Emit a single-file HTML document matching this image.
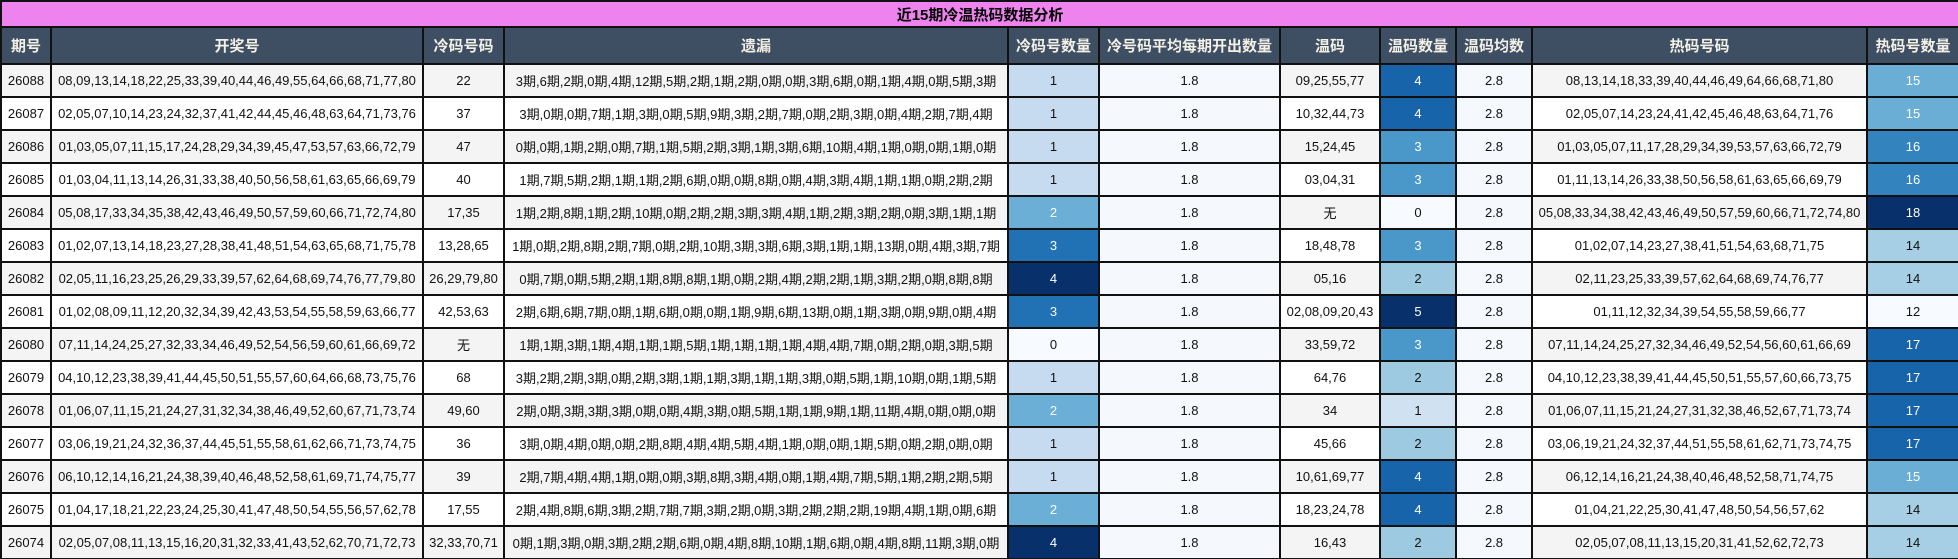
<!DOCTYPE html>
<html><head><meta charset="utf-8"><style>
html,body{margin:0;padding:0;background:#fff;width:1958px;height:559px;overflow:hidden}
table{border-collapse:collapse;table-layout:fixed;width:1958px;font-family:"Liberation Sans","Noto Sans CJK SC",sans-serif;font-size:13px;color:#111}
td,th{border:2px solid #111;text-align:center;padding:0;white-space:nowrap;overflow:hidden}
.t td{background:#ee82ee;font-weight:bold;font-size:15px;height:24px;color:#000}
.h th{background:#3f4f63;color:#f3f0e6;font-size:15px;font-weight:bold;height:35px}
tr.r td{height:31px}
tr.g td{background:#f4f4f4}
tr td.a{background:#f5f9fe}
.w{color:#fff}
</style></head><body>
<table>
<colgroup><col style="width:50px"><col style="width:372px"><col style="width:81px"><col style="width:504px"><col style="width:91px"><col style="width:181px"><col style="width:100px"><col style="width:76px"><col style="width:76px"><col style="width:335px"><col style="width:92px"></colgroup>
<tr class="t"><td colspan="11">近15期冷温热码数据分析</td></tr>
<tr class="h"><th>期号</th><th>开奖号</th><th>冷码号码</th><th>遗漏</th><th>冷码号数量</th><th>冷号码平均每期开出数量</th><th>温码</th><th>温码数量</th><th>温码均数</th><th>热码号码</th><th>热码号数量</th></tr>
<tr class="r g"><td>26088</td><td>08,09,13,14,18,22,25,33,39,40,44,46,49,55,64,66,68,71,77,80</td><td>22</td><td>3期,6期,2期,0期,4期,12期,5期,2期,1期,2期,0期,0期,3期,6期,0期,1期,4期,0期,5期,3期</td><td style="background:#c6dbef">1</td><td class="a">1.8</td><td>09,25,55,77</td><td class="w" style="background:#1764ab">4</td><td class="a">2.8</td><td>08,13,14,18,33,39,40,44,46,49,64,66,68,71,80</td><td class="w" style="background:#6aaed6">15</td></tr>
<tr class="r"><td>26087</td><td>02,05,07,10,14,23,24,32,37,41,42,44,45,46,48,63,64,71,73,76</td><td>37</td><td>3期,0期,0期,7期,1期,3期,0期,5期,9期,3期,2期,7期,0期,2期,3期,0期,4期,2期,7期,4期</td><td style="background:#c6dbef">1</td><td class="a">1.8</td><td>10,32,44,73</td><td class="w" style="background:#1764ab">4</td><td class="a">2.8</td><td>02,05,07,14,23,24,41,42,45,46,48,63,64,71,76</td><td class="w" style="background:#6aaed6">15</td></tr>
<tr class="r g"><td>26086</td><td>01,03,05,07,11,15,17,24,28,29,34,39,45,47,53,57,63,66,72,79</td><td>47</td><td>0期,0期,1期,2期,0期,7期,1期,5期,2期,3期,1期,3期,6期,10期,4期,1期,0期,0期,1期,0期</td><td style="background:#c6dbef">1</td><td class="a">1.8</td><td>15,24,45</td><td class="w" style="background:#4a98c9">3</td><td class="a">2.8</td><td>01,03,05,07,11,17,28,29,34,39,53,57,63,66,72,79</td><td class="w" style="background:#3383be">16</td></tr>
<tr class="r"><td>26085</td><td>01,03,04,11,13,14,26,31,33,38,40,50,56,58,61,63,65,66,69,79</td><td>40</td><td>1期,7期,5期,2期,1期,1期,2期,6期,0期,0期,8期,0期,4期,3期,4期,1期,1期,0期,2期,2期</td><td style="background:#c6dbef">1</td><td class="a">1.8</td><td>03,04,31</td><td class="w" style="background:#4a98c9">3</td><td class="a">2.8</td><td>01,11,13,14,26,33,38,50,56,58,61,63,65,66,69,79</td><td class="w" style="background:#3383be">16</td></tr>
<tr class="r g"><td>26084</td><td>05,08,17,33,34,35,38,42,43,46,49,50,57,59,60,66,71,72,74,80</td><td>17,35</td><td>1期,2期,8期,1期,2期,10期,0期,2期,2期,3期,3期,4期,1期,2期,3期,2期,0期,3期,1期,1期</td><td class="w" style="background:#6baed6">2</td><td class="a">1.8</td><td>无</td><td style="background:#f7fbff">0</td><td class="a">2.8</td><td>05,08,33,34,38,42,43,46,49,50,57,59,60,66,71,72,74,80</td><td class="w" style="background:#08306b">18</td></tr>
<tr class="r"><td>26083</td><td>01,02,07,13,14,18,23,27,28,38,41,48,51,54,63,65,68,71,75,78</td><td>13,28,65</td><td>1期,0期,2期,8期,2期,7期,0期,2期,10期,3期,3期,6期,3期,1期,1期,13期,0期,4期,3期,7期</td><td class="w" style="background:#2171b5">3</td><td class="a">1.8</td><td>18,48,78</td><td class="w" style="background:#4a98c9">3</td><td class="a">2.8</td><td>01,02,07,14,23,27,38,41,51,54,63,68,71,75</td><td style="background:#a6cee4">14</td></tr>
<tr class="r g"><td>26082</td><td>02,05,11,16,23,25,26,29,33,39,57,62,64,68,69,74,76,77,79,80</td><td>26,29,79,80</td><td>0期,7期,0期,5期,2期,1期,8期,8期,1期,0期,2期,4期,2期,2期,1期,3期,2期,0期,8期,8期</td><td class="w" style="background:#08306b">4</td><td class="a">1.8</td><td>05,16</td><td style="background:#9ecae1">2</td><td class="a">2.8</td><td>02,11,23,25,33,39,57,62,64,68,69,74,76,77</td><td style="background:#a6cee4">14</td></tr>
<tr class="r"><td>26081</td><td>01,02,08,09,11,12,20,32,34,39,42,43,53,54,55,58,59,63,66,77</td><td>42,53,63</td><td>2期,6期,6期,7期,0期,1期,6期,0期,0期,1期,9期,6期,13期,0期,1期,3期,0期,9期,0期,4期</td><td class="w" style="background:#2171b5">3</td><td class="a">1.8</td><td>02,08,09,20,43</td><td class="w" style="background:#08306b">5</td><td class="a">2.8</td><td>01,11,12,32,34,39,54,55,58,59,66,77</td><td style="background:#f7fbff">12</td></tr>
<tr class="r g"><td>26080</td><td>07,11,14,24,25,27,32,33,34,46,49,52,54,56,59,60,61,66,69,72</td><td>无</td><td>1期,1期,3期,1期,4期,1期,1期,5期,1期,1期,1期,1期,4期,4期,7期,0期,2期,0期,3期,5期</td><td style="background:#f7fbff">0</td><td class="a">1.8</td><td>33,59,72</td><td class="w" style="background:#4a98c9">3</td><td class="a">2.8</td><td>07,11,14,24,25,27,32,34,46,49,52,54,56,60,61,66,69</td><td class="w" style="background:#1764ab">17</td></tr>
<tr class="r"><td>26079</td><td>04,10,12,23,38,39,41,44,45,50,51,55,57,60,64,66,68,73,75,76</td><td>68</td><td>3期,2期,2期,3期,0期,2期,3期,1期,1期,3期,1期,1期,3期,0期,5期,1期,10期,0期,1期,5期</td><td style="background:#c6dbef">1</td><td class="a">1.8</td><td>64,76</td><td style="background:#9ecae1">2</td><td class="a">2.8</td><td>04,10,12,23,38,39,41,44,45,50,51,55,57,60,66,73,75</td><td class="w" style="background:#1764ab">17</td></tr>
<tr class="r g"><td>26078</td><td>01,06,07,11,15,21,24,27,31,32,34,38,46,49,52,60,67,71,73,74</td><td>49,60</td><td>2期,0期,3期,3期,3期,0期,0期,4期,3期,0期,5期,1期,1期,9期,1期,11期,4期,0期,0期,0期</td><td class="w" style="background:#6baed6">2</td><td class="a">1.8</td><td>34</td><td style="background:#d0e1f2">1</td><td class="a">2.8</td><td>01,06,07,11,15,21,24,27,31,32,38,46,52,67,71,73,74</td><td class="w" style="background:#1764ab">17</td></tr>
<tr class="r"><td>26077</td><td>03,06,19,21,24,32,36,37,44,45,51,55,58,61,62,66,71,73,74,75</td><td>36</td><td>3期,0期,4期,0期,0期,2期,8期,4期,4期,5期,4期,1期,0期,0期,1期,5期,0期,2期,0期,0期</td><td style="background:#c6dbef">1</td><td class="a">1.8</td><td>45,66</td><td style="background:#9ecae1">2</td><td class="a">2.8</td><td>03,06,19,21,24,32,37,44,51,55,58,61,62,71,73,74,75</td><td class="w" style="background:#1764ab">17</td></tr>
<tr class="r g"><td>26076</td><td>06,10,12,14,16,21,24,38,39,40,46,48,52,58,61,69,71,74,75,77</td><td>39</td><td>2期,7期,4期,4期,1期,0期,0期,3期,8期,3期,4期,0期,1期,4期,7期,5期,1期,2期,2期,5期</td><td style="background:#c6dbef">1</td><td class="a">1.8</td><td>10,61,69,77</td><td class="w" style="background:#1764ab">4</td><td class="a">2.8</td><td>06,12,14,16,21,24,38,40,46,48,52,58,71,74,75</td><td class="w" style="background:#6aaed6">15</td></tr>
<tr class="r"><td>26075</td><td>01,04,17,18,21,22,23,24,25,30,41,47,48,50,54,55,56,57,62,78</td><td>17,55</td><td>2期,4期,8期,6期,3期,2期,7期,7期,3期,2期,0期,3期,2期,2期,2期,19期,4期,1期,0期,6期</td><td class="w" style="background:#6baed6">2</td><td class="a">1.8</td><td>18,23,24,78</td><td class="w" style="background:#1764ab">4</td><td class="a">2.8</td><td>01,04,21,22,25,30,41,47,48,50,54,56,57,62</td><td style="background:#a6cee4">14</td></tr>
<tr class="r g"><td>26074</td><td>02,05,07,08,11,13,15,16,20,31,32,33,41,43,52,62,70,71,72,73</td><td>32,33,70,71</td><td>0期,1期,3期,0期,3期,2期,2期,6期,0期,4期,8期,10期,1期,6期,0期,4期,8期,11期,3期,0期</td><td class="w" style="background:#08306b">4</td><td class="a">1.8</td><td>16,43</td><td style="background:#9ecae1">2</td><td class="a">2.8</td><td>02,05,07,08,11,13,15,20,31,41,52,62,72,73</td><td style="background:#a6cee4">14</td></tr>
</table>
</body></html>
